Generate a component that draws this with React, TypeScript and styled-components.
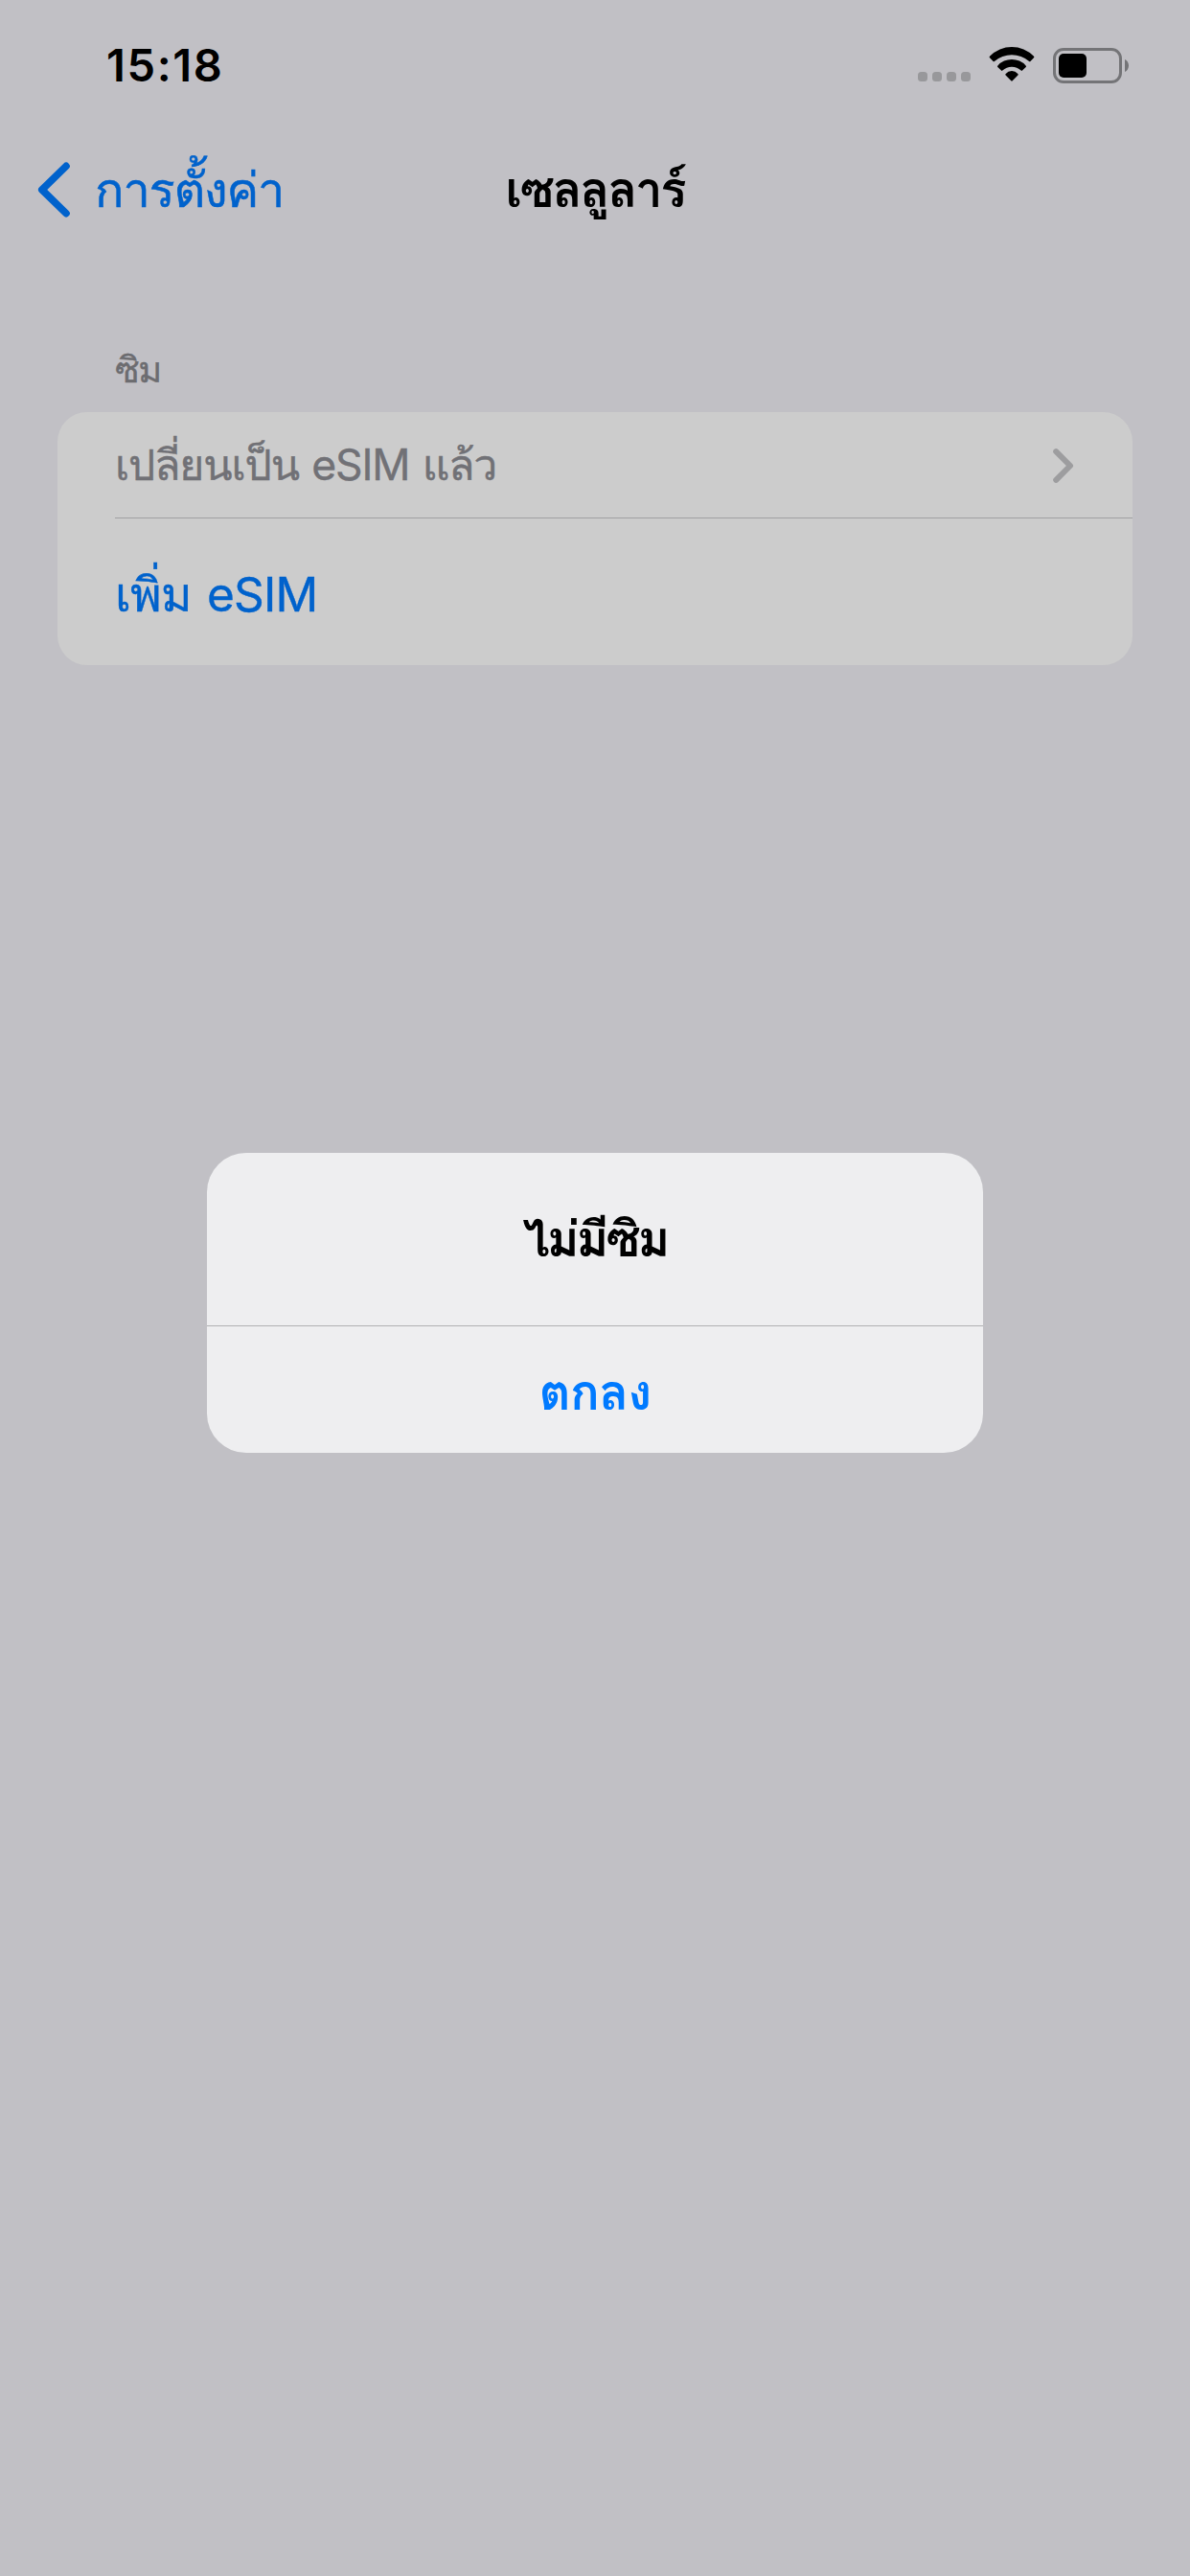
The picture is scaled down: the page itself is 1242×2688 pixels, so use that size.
import React from 'react'
import styled, { createGlobalStyle } from 'styled-components'

const GlobalStyle = createGlobalStyle`
  * {
    box-sizing: border-box;
  }
  body {
    margin: 0;
    background: #c1c0c5;
    font-family: Inter, Loma, "Noto Sans Thai Looped", "Noto Sans", sans-serif;
  }
`

function App() {
  return (
    <Screen>
      <GlobalStyle />
      <StatusBar>
        <Clock>15:18</Clock>
        <StatusIcons>
          <NoSignal>
            <Dot />
            <Dot />
            <Dot />
            <Dot />
          </NoSignal>
          <WifiIcon />
          <Battery level={0.485} />
        </StatusIcons>
      </StatusBar>

      <NavBar>
        <BackButton>
          <BackIcon />
          การตั้งค่า
        </BackButton>
        <Title>เซลลูลาร์</Title>
      </NavBar>

      <Section>
        <SectionLabel>ซิม</SectionLabel>
        <Card>
          <DisabledRow>
            <span>เปลี่ยนเป็น eSIM แล้ว</span>
            <RowIcon />
          </DisabledRow>
          <ActionRow>เพิ่ม eSIM</ActionRow>
        </Card>
      </Section>

      <AlertLayer>
        <Alert>
          <AlertTitle>ไม่มีซิม</AlertTitle>
          <AlertButton>ตกลง</AlertButton>
        </Alert>
      </AlertLayer>
    </Screen>
  )
}

function WifiIcon() {
  return (
    <svg width="49" height="38" viewBox="0 0 49 38">
      <path d="M1.2 9.6 A31.9 31.9 0 0 1 46.8 9.6 Q47.8 10.4 47 11.3 L43.4 14.9 Q42.8 15.5 42.1 14.9 A28 28 0 0 0 5.9 14.9 Q5.2 15.5 4.6 14.9 L1 11.3 Q0.2 10.4 1.2 9.6Z" />
      <path d="M9.4 19.4 A19.6 19.6 0 0 1 38.6 19.4 Q39.5 20.2 38.7 21 L35 24.6 Q34.4 25.2 33.7 24.6 A14.2 14.2 0 0 0 14.3 24.6 Q13.6 25.2 13 24.6 L9.3 21 Q8.5 20.2 9.4 19.4Z" />
      <path d="M17.7 28 A8.2 8.2 0 0 1 30.3 28 Q31.2 28.8 30.4 29.6 L24.7 35.3 Q24 36 23.3 35.3 L17.6 29.6 Q16.8 28.8 17.7 28Z" />
    </svg>
  )
}

interface Ibattery {
  level: number;
}
function Battery(props: Ibattery) {
  return (
    <BatteryWrap>
      <BatteryBody>
        <BatteryFill style={{ width: `${props.level * 100}%` }} />
      </BatteryBody>
      <svg width="4" height="13" viewBox="0 0 4 13">
        <path d="M0 0 C2.4 1.2 4 3.6 4 6.5 C4 9.4 2.4 11.8 0 13Z" fill="#747477" />
      </svg>
    </BatteryWrap>
  )
}

function BackIcon() {
  return (
    <svg width="34" height="58" viewBox="0 0 34 58" fill="none" stroke="#0062cc" strokeWidth="7.6" strokeLinecap="round" strokeLinejoin="round">
      <path d="M30 4.4 L4.8 29 L30 53.6" />
    </svg>
  )
}

function RowIcon() {
  return (
    <svg width="22" height="36" viewBox="0 0 22 36" fill="none" stroke="#9d9d9f" strokeWidth="6" strokeLinecap="round" strokeLinejoin="round">
      <path d="M3.2 3.2 L18 18 L3.2 32.8" />
    </svg>
  )
}

export default App

const Screen = styled.div`
  width: 1242px;
  height: 2688px;
  overflow: hidden;
  background: #c1c0c5;
  color: #000000;
`
const StatusBar = styled.div`
  height: 132px;
  padding: 44px 64px 0 111px;
  display: flex;
  justify-content: space-between;
  align-items: flex-start;
`
const Clock = styled.div`
  font-size: 47px;
  font-weight: 600;
  line-height: 48px;
  letter-spacing: 1.6px;
`
const StatusIcons = styled.div`
  height: 48px;
  display: flex;
  align-items: center;
`
const NoSignal = styled.div`
  display: flex;
  gap: 5px;
  margin: 24px 19px 0 0;
`
const Dot = styled.span`
  width: 10px;
  height: 10px;
  border-radius: 3.5px;
  background: #98989b;
`
const BatteryWrap = styled.div`
  display: flex;
  align-items: center;
  gap: 3px;
  margin-left: 18px;
`
const BatteryBody = styled.div`
  width: 72px;
  height: 37px;
  padding: 3px;
  border: 3px solid #747477;
  border-radius: 11px;
`
const BatteryFill = styled.div`
  height: 25px;
  border-radius: 5px;
  background: #000000;
`
const NavBar = styled.div`
  height: 132px;
  padding: 0 39px;
  display: grid;
  grid-template-columns: 1fr auto 1fr;
  align-items: center;
  line-height: 60px;
`
const BackButton = styled.div`
  display: flex;
  align-items: center;
  gap: 26px;
  color: #0062cc;
  font-size: 50.5px;
  letter-spacing: -1.2px;
  -webkit-text-stroke: 0.5px #0062cc;
`
const Title = styled.div`
  font-size: 51px;
  font-weight: 600;
  letter-spacing: -2.3px;
`
const Section = styled.div`
  padding: 96px 60px 0;
`
const SectionLabel = styled.div`
  padding-left: 60px;
  margin-bottom: 20px;
  font-size: 38px;
  line-height: 50px;
  letter-spacing: -1.6px;
  color: #6c6c70;
  -webkit-text-stroke: 0.4px #6c6c70;
`
const Card = styled.div`
  height: 264px;
  border-radius: 31px;
  background: #cccccc;
  overflow: hidden;
`
const DisabledRow = styled.div`
  height: 111px;
  margin-left: 60px;
  padding-right: 61px;
  display: flex;
  justify-content: space-between;
  align-items: center;
  border-bottom: 1px solid #a0a0a2;
  font-size: 44.5px;
  line-height: 60px;
  letter-spacing: -1.15px;
  word-spacing: 2px;
  color: #717176;
  -webkit-text-stroke: 0.4px #717176;
  svg {
    margin-top: 2px;
  }
`
const ActionRow = styled.div`
  height: 153px;
  padding: 4px 0 0 60px;
  display: flex;
  align-items: center;
  font-size: 49.5px;
  line-height: 60px;
  letter-spacing: -0.8px;
  word-spacing: 3px;
  color: #0062cc;
  -webkit-text-stroke: 0.4px #0062cc;
`
/* the alert floats over the settings page */
const AlertLayer = styled.div`
  position: fixed;
  top: 0;
  left: 0;
  width: 1242px;
  height: 2688px;
  padding-top: 31px;
  display: flex;
  justify-content: center;
  align-items: center;
`
const Alert = styled.div`
  width: 810px;
  height: 313px;
  border-radius: 41px;
  background: #eeeef0;
  overflow: hidden;
`
const AlertTitle = styled.div`
  height: 181px;
  display: flex;
  justify-content: center;
  align-items: center;
  border-bottom: 1px solid #b0b0b3;
  font-size: 51px;
  font-weight: 600;
  line-height: 60px;
  letter-spacing: -2.9px;
`
const AlertButton = styled.div`
  height: 132px;
  padding-top: 5px;
  display: flex;
  justify-content: center;
  align-items: center;
  font-size: 51px;
  font-weight: 600;
  line-height: 60px;
  letter-spacing: -0.8px;
  color: #007aff;
`
